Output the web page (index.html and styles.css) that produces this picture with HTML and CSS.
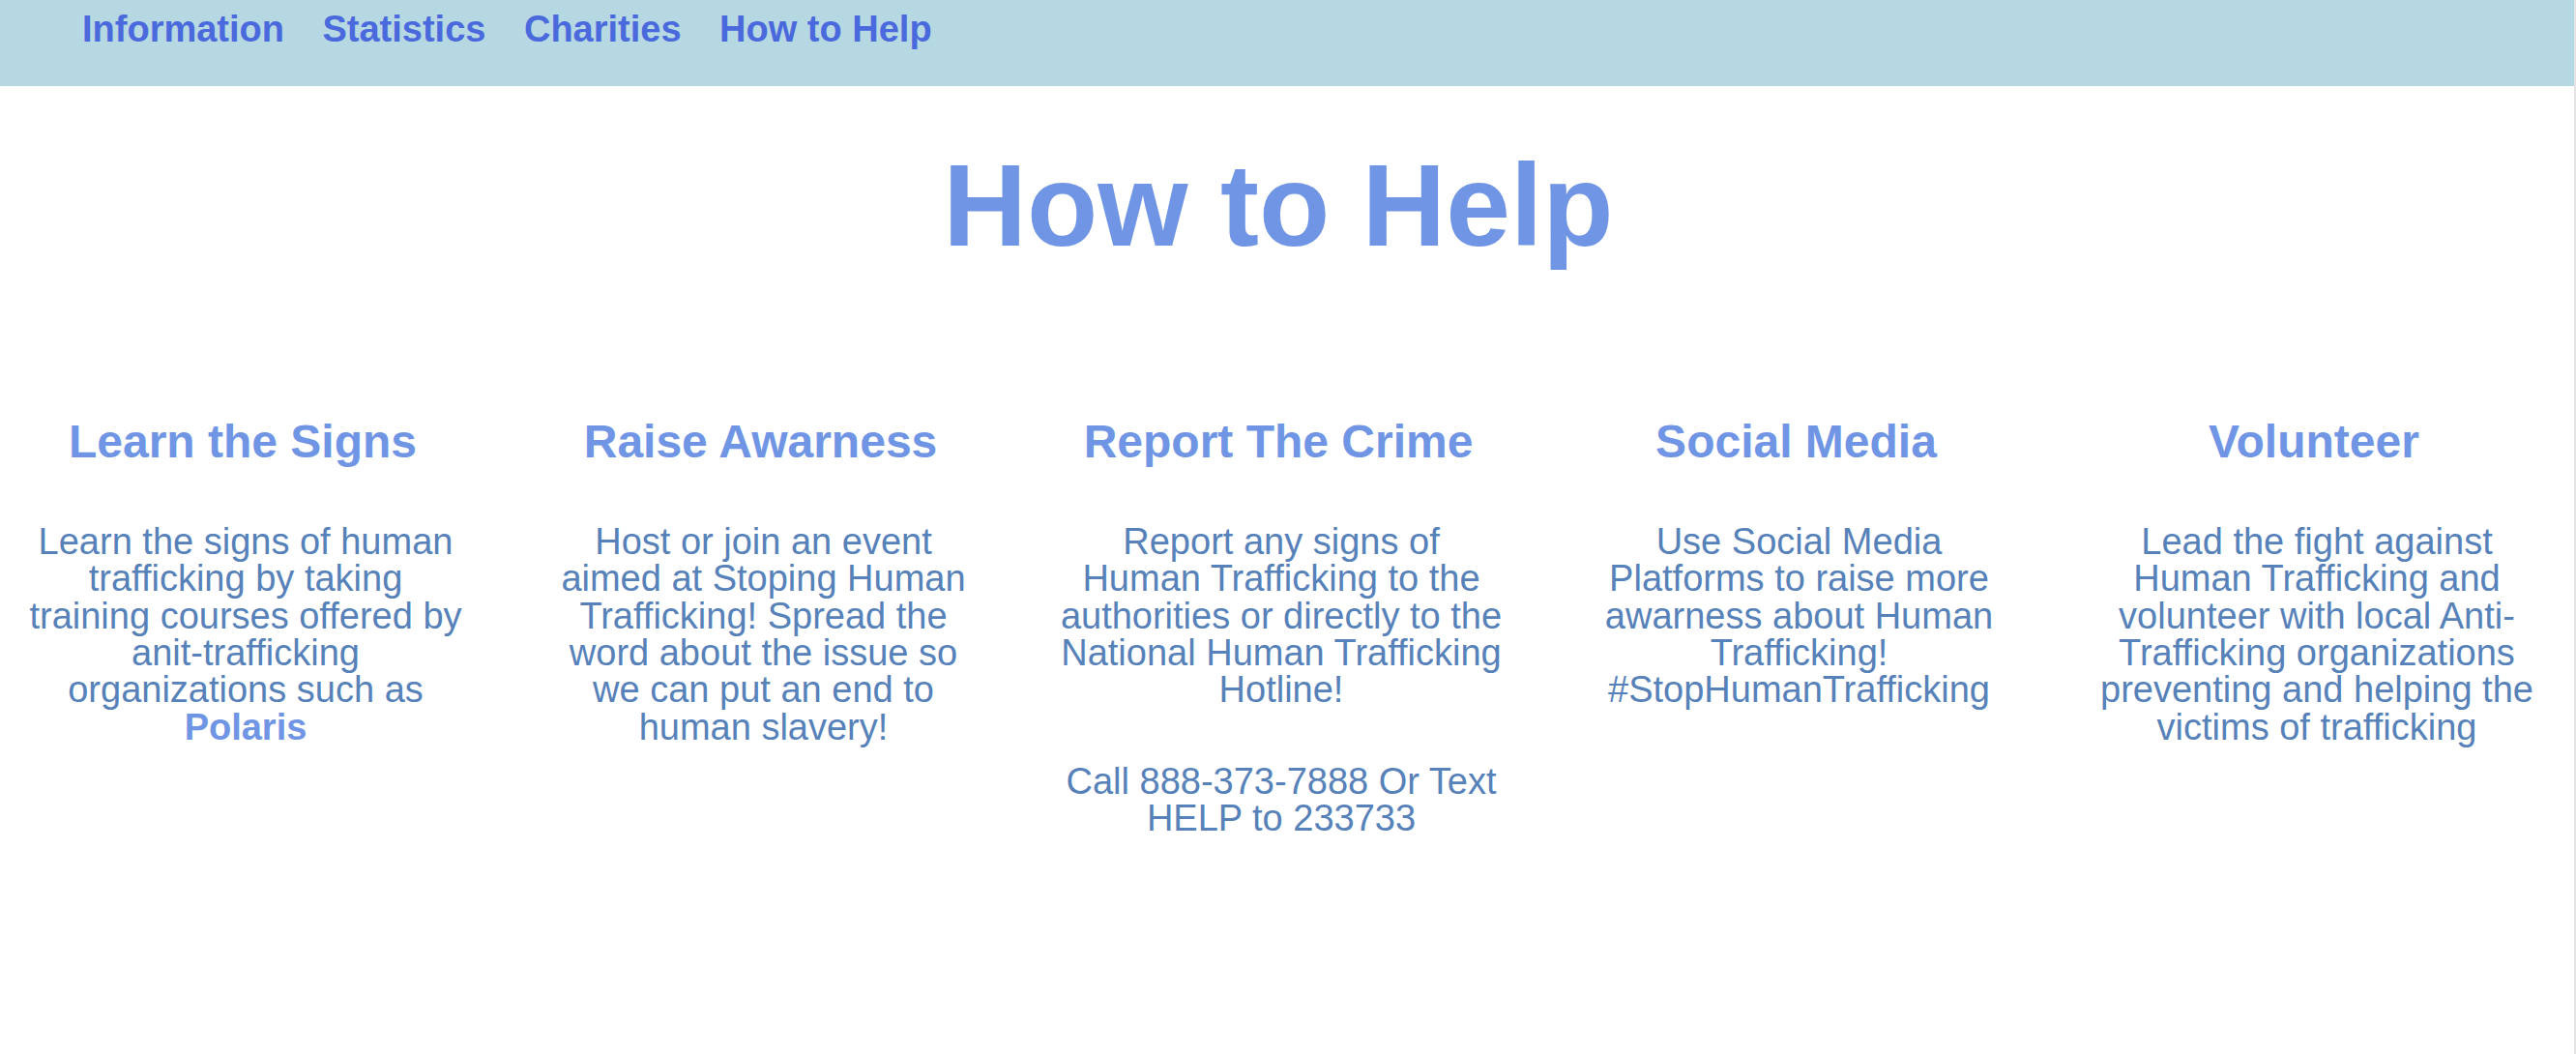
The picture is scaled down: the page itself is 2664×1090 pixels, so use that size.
FILE: index.html
```html
<!DOCTYPE html>
<html lang="en">
<head>
<meta charset="utf-8">
<title>How to Help</title>
<link rel="stylesheet" href="styles.css">
</head>
<body>
<nav class="topnav">
  <a href="#">Information</a>
  <a href="#">Statistics</a>
  <a href="#">Charities</a>
  <a href="#">How to Help</a>
</nav>
<main>
  <h1 class="title">How to Help</h1>
  <section class="columns">
    <div class="col">
      <h2>Learn the Signs</h2>
      <p>Learn the signs of human trafficking by taking training courses offered by anit-trafficking organizations such as <a class="link" href="#">Polaris</a></p>
    </div>
    <div class="col">
      <h2>Raise Awarness</h2>
      <p>Host or join an event aimed at Stoping Human Trafficking! Spread the word about the issue so we can put an end to human slavery!</p>
    </div>
    <div class="col">
      <h2>Report The Crime</h2>
      <p>Report any signs of Human Trafficking to the authorities or directly to the National Human Trafficking Hotline!</p>
      <p>Call 888-373-7888 Or Text HELP to 233733</p>
    </div>
    <div class="col">
      <h2>Social Media</h2>
      <p>Use Social Media Platforms to raise more awarness about Human Trafficking! #StopHumanTrafficking</p>
    </div>
    <div class="col">
      <h2>Volunteer</h2>
      <p>Lead the fight against Human Trafficking and volunteer with local Anti-Trafficking organizations preventing and helping the victims of trafficking</p>
    </div>
  </section>
</main>
</body>
</html>
```
FILE: styles.css
```css
html, body {
  margin: 0;
  padding: 0;
}

body {
  font-family: "Liberation Sans", Arial, Helvetica, sans-serif;
  background: #ffffff;
  min-height: 100vh;
  box-sizing: border-box;
  border-right: 2px solid #e4e4e4;
}

.topnav {
  display: flex;
  gap: 39.5px;
  height: 89px;
  box-sizing: border-box;
  padding: 10.5px 0 0 85px;
  background: #b6d8e3;
}

.topnav a {
  font-size: 38px;
  line-height: 38px;
  font-weight: bold;
  color: #4a69dc;
  text-decoration: none;
}

.title {
  margin: 63.4px 0 0;
  padding-right: 18px;
  text-align: center;
  font-size: 120px;
  line-height: 120px;
  font-weight: bold;
  color: #6f95e4;
}

.columns {
  display: grid;
  grid-template-columns: repeat(5, 458px);
  column-gap: 77.5px;
  padding-left: 22px;
  margin-top: 160.3px;
}

.col {
  text-align: center;
}

.col h2 {
  margin: 0;
  font-size: 48px;
  line-height: 48px;
  font-weight: bold;
  color: #6f95e4;
}

.col p {
  margin: 60.3px -3px 0 3px;
  font-size: 38px;
  line-height: 38.33px;
  color: #5681b9;
}

.col p + p {
  margin-top: 56px;
}

.link {
  font-weight: bold;
  color: #6f95e4;
  text-decoration: none;
}
```
